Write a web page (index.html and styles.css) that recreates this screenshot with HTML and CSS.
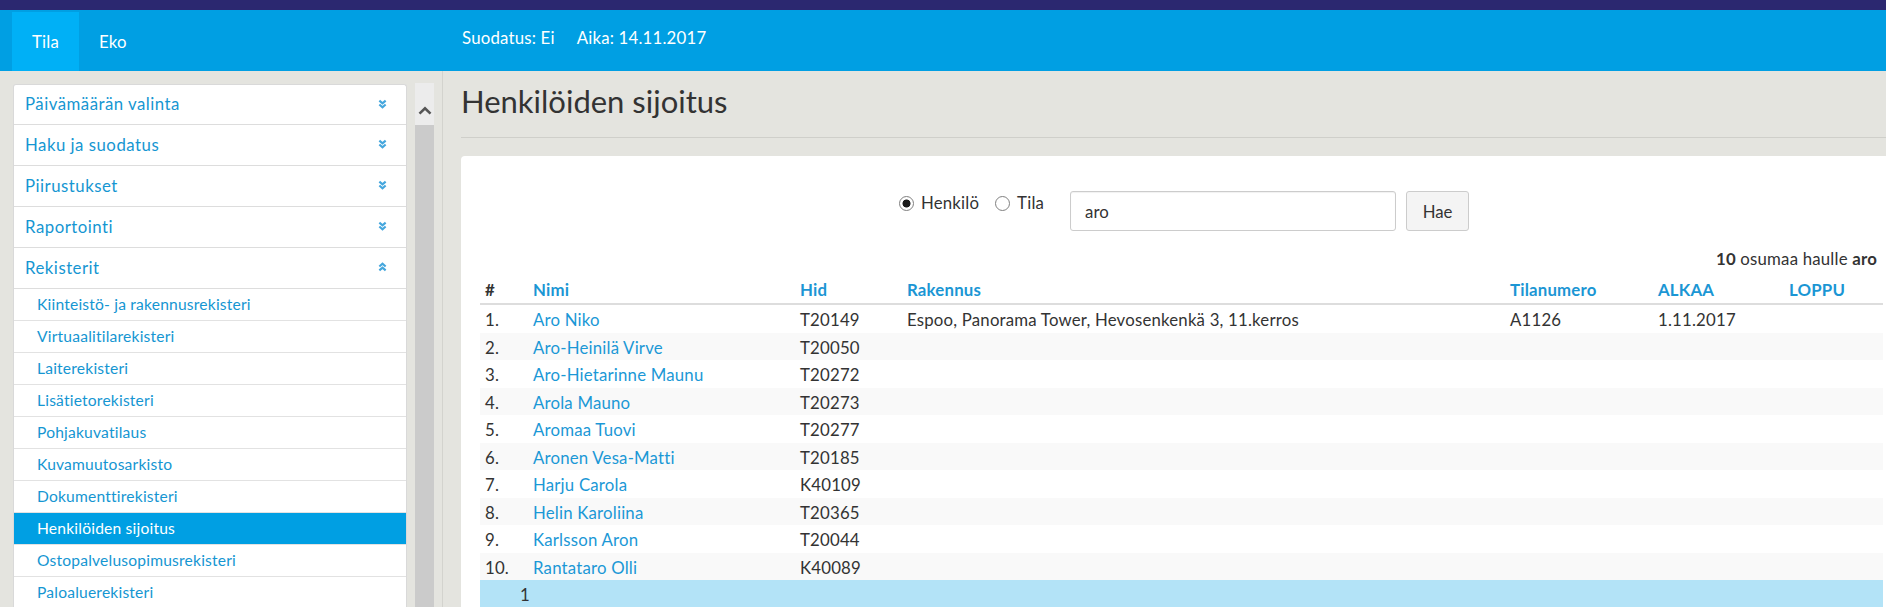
FILE: index.html
```html
<!DOCTYPE html>
<html lang="fi">
<head>
<meta charset="utf-8">
<title>Henkilöiden sijoitus</title>
<link rel="stylesheet" href="styles.css">
</head>
<body>
<div class="topbar"></div>
<header class="header">
  <nav class="tabs">
    <a class="tab active" href="#">Tila</a>
    <a class="tab" href="#">Eko</a>
  </nav>
  <div class="status">
    <span>Suodatus: Ei</span>
    <span>Aika: 14.11.2017</span>
  </div>
</header>
<div class="layout">
  <aside class="sidebar">
    <div class="panel">
      <div class="acc-head"><span>Päivämäärän valinta</span><svg class="chev" viewBox="0 0 10 10" width="9" height="10"><path d="M1.5 1.2 5 4.2 8.5 1.2M1.5 5.6 5 8.6 8.5 5.6"/></svg></div>
      <div class="acc-head"><span>Haku ja suodatus</span><svg class="chev" viewBox="0 0 10 10" width="9" height="10"><path d="M1.5 1.2 5 4.2 8.5 1.2M1.5 5.6 5 8.6 8.5 5.6"/></svg></div>
      <div class="acc-head"><span>Piirustukset</span><svg class="chev" viewBox="0 0 10 10" width="9" height="10"><path d="M1.5 1.2 5 4.2 8.5 1.2M1.5 5.6 5 8.6 8.5 5.6"/></svg></div>
      <div class="acc-head"><span>Raportointi</span><svg class="chev" viewBox="0 0 10 10" width="9" height="10"><path d="M1.5 1.2 5 4.2 8.5 1.2M1.5 5.6 5 8.6 8.5 5.6"/></svg></div>
      <div class="acc-head"><span>Rekisterit</span><svg class="chev" viewBox="0 0 10 10" width="9" height="10"><path d="M1.5 4.4 5 1.4 8.5 4.4M1.5 8.8 5 5.8 8.5 8.8"/></svg></div>
      <a class="sub" href="#">Kiinteistö- ja rakennusrekisteri</a>
      <a class="sub" href="#">Virtuaalitilarekisteri</a>
      <a class="sub" href="#">Laiterekisteri</a>
      <a class="sub" href="#">Lisätietorekisteri</a>
      <a class="sub" href="#">Pohjakuvatilaus</a>
      <a class="sub" href="#">Kuvamuutosarkisto</a>
      <a class="sub" href="#">Dokumenttirekisteri</a>
      <a class="sub active" href="#">Henkilöiden sijoitus</a>
      <a class="sub" href="#">Ostopalvelusopimusrekisteri</a>
      <a class="sub" href="#">Paloaluerekisteri</a>
    </div>
    <div class="vscroll">
      <div class="vscroll-btn"><svg viewBox="0 0 14 9" width="14" height="9"><path d="M1.5 7.6 7 2.2 12.5 7.6"/></svg></div>
      <div class="vscroll-thumb"></div>
    </div>
  </aside>
  <main class="content">
    <h1 class="title">Henkilöiden sijoitus</h1>
    <section class="card">
      <form class="search">
        <label class="radio r1"><input type="radio" name="t" checked><span>Henkilö</span></label>
        <label class="radio r2"><input type="radio" name="t"><span>Tila</span></label>
        <input class="query" type="text" value="aro">
        <button class="btn" type="button">Hae</button>
      </form>
      <div class="count"><b>10</b> osumaa haulle <b>aro</b></div>
      <table class="results">
        <colgroup>
          <col class="c-num"><col class="c-name"><col class="c-hid"><col class="c-bld"><col class="c-room"><col class="c-start"><col class="c-end">
        </colgroup>
        <thead>
          <tr><th class="hash">#</th><th>Nimi</th><th>Hid</th><th>Rakennus</th><th>Tilanumero</th><th>ALKAA</th><th>LOPPU</th></tr>
        </thead>
        <tbody>
          <tr><td>1.</td><td><a href="#">Aro Niko</a></td><td>T20149</td><td>Espoo, Panorama Tower, Hevosenkenkä 3, 11.kerros</td><td>A1126</td><td>1.11.2017</td><td></td></tr>
          <tr><td>2.</td><td><a href="#">Aro-Heinilä Virve</a></td><td>T20050</td><td></td><td></td><td></td><td></td></tr>
          <tr><td>3.</td><td><a href="#">Aro-Hietarinne Maunu</a></td><td>T20272</td><td></td><td></td><td></td><td></td></tr>
          <tr><td>4.</td><td><a href="#">Arola Mauno</a></td><td>T20273</td><td></td><td></td><td></td><td></td></tr>
          <tr><td>5.</td><td><a href="#">Aromaa Tuovi</a></td><td>T20277</td><td></td><td></td><td></td><td></td></tr>
          <tr><td>6.</td><td><a href="#">Aronen Vesa-Matti</a></td><td>T20185</td><td></td><td></td><td></td><td></td></tr>
          <tr><td>7.</td><td><a href="#">Harju Carola</a></td><td>K40109</td><td></td><td></td><td></td><td></td></tr>
          <tr><td>8.</td><td><a href="#">Helin Karoliina</a></td><td>T20365</td><td></td><td></td><td></td><td></td></tr>
          <tr><td>9.</td><td><a href="#">Karlsson Aron</a></td><td>T20044</td><td></td><td></td><td></td><td></td></tr>
          <tr><td>10.</td><td><a href="#">Rantataro Olli</a></td><td>K40089</td><td></td><td></td><td></td><td></td></tr>
        </tbody>
        <tfoot>
          <tr class="pager"><td colspan="7">1</td></tr>
        </tfoot>
      </table>
    </section>
  </main>
</div>
</body>
</html>
```

FILE: styles.css
```css
* { box-sizing: border-box; }
html, body { margin: 0; height: 100%; }
body {
  font-family: Lato, "Open Sans", sans-serif;
  font-size: 16.8px;
  letter-spacing: 0.2px;
  color: #333;
  background: #e4e4df;
  overflow: hidden;
}
a { text-decoration: none; color: inherit; }

.topbar { height: 10px; background: #2b2870; }

.header {
  height: 61px;
  background: #009fe3;
  color: #fff;
  display: grid;
  grid-template-columns: 443px 1fr;
}
.tabs { display: flex; padding: 2px 0 0 12px; }
.tab { display: flex; align-items: center; padding: 0 20px; color: #fff; }
.tab.active { background: #00b0f6; }
.status { display: flex; gap: 22px; padding: 18px 0 0 19px; line-height: 20px; }

.layout {
  display: grid;
  grid-template-columns: 443px 1fr;
  height: calc(100% - 71px);
}

.sidebar {
  display: flex;
  align-items: flex-start;
  padding: 13px 0 0 13px;
  border-right: 1px solid #d3d3ce;
  overflow: hidden;
}
.panel {
  width: 394px;
  flex: none;
  background: #fff;
  border: 1px solid #d9d9d9;
  border-bottom: 0;
  border-radius: 3px 3px 0 0;
}
.acc-head {
  display: flex;
  align-items: center;
  justify-content: space-between;
  height: 41px;
  padding: 0 19px 2px 11px;
  border-bottom: 1px solid #dddddd;
  color: #1596d2;
  letter-spacing: 0.5px;
}
.acc-head:first-child { height: 40px; }
.chev path { fill: none; stroke: #44a6dd; stroke-width: 2.4; }
.sub {
  display: block;
  height: 32px;
  line-height: 31px;
  padding-left: 23px;
  border-bottom: 1px solid #e2e2e2;
  font-size: 15.6px;
  color: #1596d2;
}
.sub.active { background: #009fe3; color: #fff; }

.vscroll {
  width: 19px;
  flex: none;
  margin: -1px 0 0 8px;
  align-self: stretch;
  display: flex;
  flex-direction: column;
}
.vscroll-btn {
  height: 42px;
  background: #ececec;
  display: flex;
  justify-content: center;
  padding-top: 23px;
}
.vscroll-btn path { fill: none; stroke: #555; stroke-width: 2.6; }
.vscroll-thumb { flex: 1; background: #cbcbcb; }

.content { padding-left: 18px; overflow: hidden; }
.title {
  margin: 12px 0 0;
  padding-bottom: 17px;
  border-bottom: 1px solid #cfcfca;
  font-size: 31px;
  font-weight: 400;
  line-height: 37px;
  letter-spacing: 0;
  color: #333;
}
.card {
  margin: 18px -16px 0 0;
  background: #fff;
  border-radius: 4px 4px 0 0;
  padding: 35px 19px 0;
}

.search {
  display: flex;
  justify-content: center;
  align-items: flex-start;
  padding-left: 5px;
  margin: 0;
}
.radio { display: flex; align-items: center; gap: 7px; margin-top: 2px; line-height: 20px; }
.radio.r1 { margin-right: 16px; }
.radio.r2 { margin-right: 26px; }
.radio input {
  appearance: none;
  -webkit-appearance: none;
  width: 15px;
  height: 15px;
  margin: 0;
  border: 1.5px solid #808080;
  border-radius: 50%;
  background: #fff;
}
.radio input:checked { background: radial-gradient(circle, #1a1a1a 0, #1a1a1a 3.6px, #fff 4.4px); }
.query {
  width: 326px;
  height: 40px;
  margin: 0 10px 0 0;
  padding: 0 14px;
  border: 1px solid #cccccc;
  border-radius: 3px;
  box-shadow: inset 0 1px 1px rgba(0,0,0,0.06);
  font: inherit;
  color: #333;
}
.btn {
  width: 63px;
  height: 40px;
  padding: 0;
  border: 1px solid #cccccc;
  border-radius: 3px;
  background: #f4f4f4;
  font: inherit;
  color: #333;
}

.count { text-align: right; padding: 18px 6px 0 0; line-height: 20px; }
.count b { font-weight: 700; }

.results {
  width: 100%;
  margin-top: 6px;
  border-collapse: collapse;
  table-layout: fixed;
}
.c-num { width: 48px; }
.c-name { width: 267px; }
.c-hid { width: 107px; }
.c-bld { width: 603px; }
.c-room { width: 148px; }
.c-start { width: 131px; }
.c-end { width: 99px; }
.results th {
  padding: 5px 5px 3px;
  text-align: left;
  line-height: 20px;
  font-weight: 700;
  color: #1b96d4;
  border-bottom: 2px solid #dddddd;
}
.results th.hash { color: #333; }
.results td {
  padding: 5px 5px 3px;
  line-height: 19.5px;
  white-space: nowrap;
}
.results td a { color: #1b98d6; }
.results tbody tr:nth-child(even) { background: #f9f9f9; }
.results .pager td { background: #b3e3f7; padding-left: 40px; }
```
